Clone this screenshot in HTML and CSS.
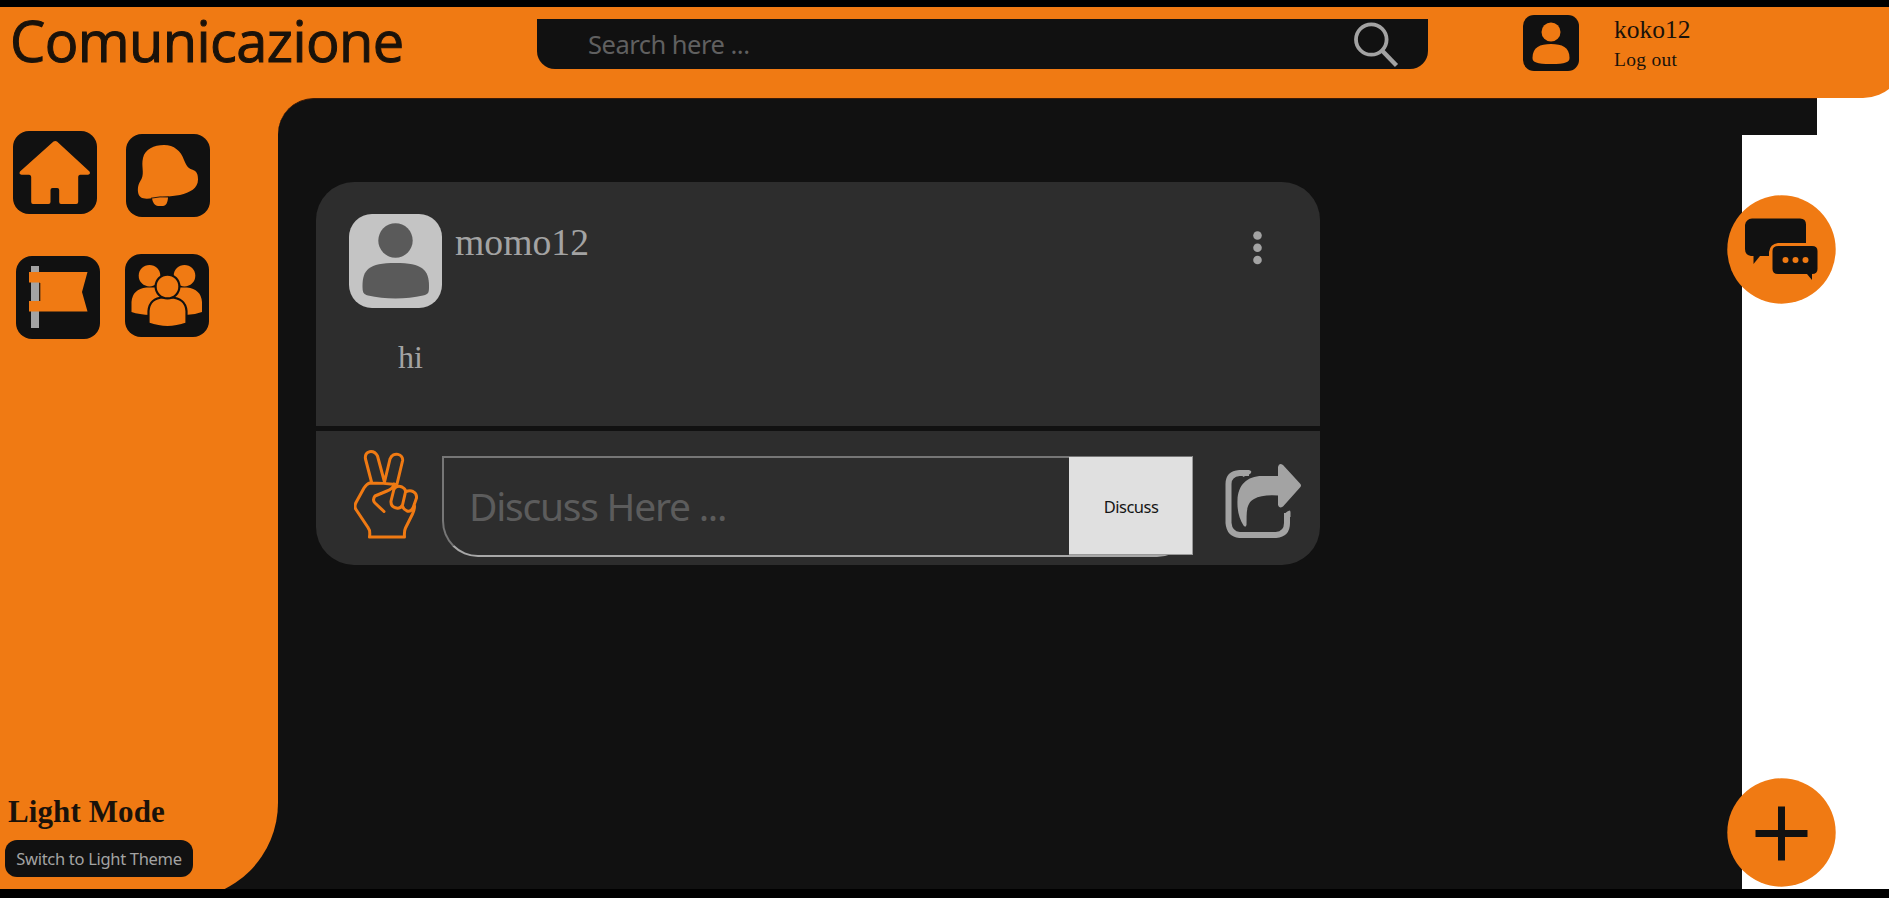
FILE: index.html
```html
<!DOCTYPE html>
<html lang="en">
<head>
<meta charset="utf-8">
<title>Comunicazione</title>
<link rel="stylesheet" href="styles.css">
</head>
<body>
<div class="screen">
  <header class="header">
    <h1 class="brand">Comunicazione</h1>
    <div class="search">
      <span class="search-hint">Search here ...</span>
      <svg class="search-icon" width="46" height="46" viewBox="0 0 46 46"><ellipse cx="18.300" cy="17.500" rx="15.300" ry="15.200" fill="none" stroke="#a3a3a3" stroke-width="3.800"/><path d="M29 28.500L43.500 43.500" stroke="#a3a3a3" stroke-width="4.400"/></svg>
    </div>
    <svg class="me" width="56" height="56" viewBox="0 0 56 56"><rect width="56" height="56" rx="11" fill="#111"/><circle cx="28" cy="17" r="9.500" fill="#f07a13"/><path d="M9.500 43C9.500 32 17 29 28 29s18.500 3 18.500 14c0 4-4 6-18.500 6s-18.500-2-18.500-6z" fill="#f07a13"/></svg>
    <div class="account"><span class="account-name">koko12</span><span class="logout">Log out</span></div>
  </header>

  <div class="body">
    <aside class="sidebar">
      <nav class="nav">
        <svg class="nav-home" width="84" height="83" viewBox="0 0 84 83"><rect width="84" height="83" rx="16" fill="#111"/><path d="M44 10.500L76.500 40.500q1.500 2.500-1.500 3.200H67q-1.800.3-1.800 2V71q0 2-2 2H48q-1.800 0-1.800-2V59q0-2-2-2H39.500q-2 0-2 2v12q0 2-2 2H20q-1.800 0-1.800-2V46q0-2-2-2.300H8.500q-3-.5-1.500-3.200L40.500 10.500q1.800-1.200 3.500 0z" fill="#f07a13"/></svg>
        <svg class="nav-bell" width="84" height="83" viewBox="0 0 84 83"><rect width="84" height="83" rx="16" fill="#111"/><path d="M26 63h16c0 5-2 9-5 9h-5c-3 0-6-4-6-9z" fill="#f07a13"/><path d="M17 24C19 15 28 11 38 11c10 0 17 6 20 15 2.500 6 4 8 8 9.500 5 1.500 6 5 6 10 0 9-8 13-18 15.500-10 2-19 1.500-27 3-8 1.500-14 1-15-6-.5-6 1-9 3.500-13 3-7-.5-13 1.500-21z" fill="#f07a13"/><path d="M25 64.200Q34 62.200 43 63" fill="none" stroke="#111" stroke-width=".9"/></svg>
        <svg class="nav-flag" width="84" height="83" viewBox="0 0 84 83"><rect width="84" height="83" rx="16" fill="#111"/><path d="M15 10h8v62h-8z" fill="#a3a3a3"/><path d="M13 16h58.500L66 36l5.500 19.500H13V45h10.500V26.500H13z" fill="#f07a13"/><path d="M23.800 27v18" stroke="#111" stroke-width="1"/></svg>
        <svg class="nav-group" width="84" height="83" viewBox="0 0 84 83"><rect width="84" height="83" rx="16" fill="#111"/><g fill="#f07a13"><circle cx="24.500" cy="21.700" r="10.800"/><circle cx="59.500" cy="21.700" r="10.800"/><path d="M6.500 58V48q1-13 15-14.500h40.500Q76 35 77 48v10q-9 3.500-19 3H26q-12-.5-19.500-3z"/></g><g fill="#f07a13" stroke="#111" stroke-width="2.200"><path d="M23.500 69.500V57q1-13 15-13.500h7q15 .5 16 13.500v12.500q-10 3.500-19 3.500t-19-3.500z"/><circle cx="42.500" cy="32.500" r="11.900"/></g></svg>
      </nav>
      <div class="theme"><strong class="theme-title">Light Mode</strong><button class="theme-button">Switch to Light Theme</button></div>
    </aside>

    <main class="feed">
      <article class="post">
        <div class="post-head">
          <svg class="avatar" width="93" height="94" viewBox="0 0 93 94"><rect width="93" height="94" rx="23" fill="#c4c4c4"/><circle cx="46.500" cy="26.500" r="17.200" fill="#5a5a5a"/><path d="M13.500 72c0-16 6-23 33-23s33.500 7 33.500 23c0 6 0 8-6 9.500-17 4-38 4-55 0-5-1.500-5.500-3.500-5.500-9.500z" fill="#5a5a5a"/></svg>
          <span class="author">momo12</span>
          <svg class="more" width="10" height="36" viewBox="0 0 10 36" fill="#a3a3a3"><circle cx="4.500" cy="5.500" r="4.300"/><circle cx="4.500" cy="17.800" r="4.300"/><circle cx="4.500" cy="30" r="4.300"/></svg>
        </div>
        <p class="post-text">hi</p>
        <div class="post-foot">
          <svg class="peace" width="66" height="90" viewBox="0 0 66 90" fill="none" stroke="#f07a13" stroke-width="3" stroke-linejoin="round" stroke-linecap="round"><path d="M17.500 32L11.500 9C10 0 20 -.5 23.500 6l7 26L36 9c3-8 14-5 12.500 2L43 34M42 34.500q-12-1.500-26-1.500-3 .5-6 5L2 52.500q-2 4 0 7l12 18q2.500 3 1.500 9.500h35q-.5-6 1-9l7-14q2-4 2-8"/><path d="M40 34q-1 5-7 7l-12 5q-3 4 0 7L30 61.500M37 51l3-12q3-4 8-2 4 2 3.500 5l-3 13q-2 4-6 3-6-1-5.500-7zM51.500 42q4-2 7.500-.5 4 2 3.500 6.500l-3.500 10q-2 4-6 3-4-2-4.500-5"/></svg>
          <div class="discuss">
            <span class="discuss-hint">Discuss Here ...</span>
            <button class="discuss-button">Discuss</button>
          </div>
          <svg class="share" width="76" height="76" viewBox="0 0 76 76"><path d="M24 10H14.500Q3.500 11 3.500 21V60q1 11 11 12H51q11-1 11-12V50" fill="none" stroke="#a3a3a3" stroke-width="6"/><path d="M16 7h8q4 1 1 4l-7 3z" fill="#a3a3a3"/><path d="M59.500 53q0-4 5-5.500 1 0 1 2V54h-6z" fill="#a3a3a3"/><path d="M53 13V4q1-5 5-2L75 20.500q2 2 0 4L58 43.500Q54 46 53 42V32.500Q37 31.500 29 36c-9 5-7 16-7.500 26q-1 3-3 .5C14 55 12 47 12.500 37 13 22 22 13 37 13z" fill="#a3a3a3"/></svg>
        </div>
      </article>
    </main>
    <div class="step"></div>
  </div>

  <svg class="fab fab-chat" width="109" height="109" viewBox="0 0 109 109"><circle cx="54.500" cy="54.500" r="54.200" fill="#f07a13"/><path d="M25 23.500h48q6 0 6 6V48H51q-8 1-9 9v4H33l-6.500 8V61H24q-6-1-6-7V30q1-6 7-6.500z" fill="#111"/><path d="M51.500 51H85q5.500 0 5.500 5v18q0 5-5.500 5v6l-5-6H51q-5.500 0-5.500-5V56q0-5 6-5z" fill="#111"/><g fill="#f07a13"><circle cx="58.500" cy="65" r="3"/><circle cx="68.500" cy="65" r="3"/><circle cx="78.500" cy="65" r="3"/></g></svg>
  <svg class="fab fab-add" width="109" height="109" viewBox="0 0 109 109"><circle cx="54.500" cy="54.500" r="54.200" fill="#f07a13"/><path d="M28.500 52h52v7h-52zM51 28.500h7v54h-7z" fill="#111"/></svg>
</div>
</body>
</html>
```

FILE: styles.css
```css
* { box-sizing: border-box; }
body { margin: 0; padding: 7px 0 9px; height: 898px; background: #000; overflow: hidden; font-family: "Liberation Serif", serif; }
button { border: 0; margin: 0; padding: 0; }
svg { display: block; flex: none; }
.screen { position: relative; height: 882px; background: #fff; }

.header { display: flex; align-items: flex-start; height: 91px; margin-right: -16px; background: #f07a13; border-bottom-right-radius: 42px; color: #1a120a; }
.brand { width: 537px; margin: 0; padding-left: 10px; font: 400 56px/66px "Open Sans", sans-serif; letter-spacing: -.6px; -webkit-text-stroke: 1px #1a120a; white-space: nowrap; flex: none; }
.search { display: flex; justify-content: space-between; width: 891px; height: 50px; margin-top: 12px; padding: 0 29px 0 51px; background: #111; border-radius: 0 0 18px 18px; flex: none; }
.search-hint { font: 25.500px/51px "Noto Sans", sans-serif; letter-spacing: -.5px; color: #606060; }
.search-icon { margin-top: 3px; }
.me { margin: 8px 35px 0 95px; }
.account { display: flex; flex-direction: column; padding-top: 8px; }
.account-name { font-size: 25.500px; line-height: 30px; }
.logout { font-size: 19.500px; line-height: 29px; letter-spacing: .3px; }

.body { display: flex; align-items: flex-start; height: 791px; overflow: hidden; background: linear-gradient(#f07a13, #f07a13) 0 0 / 320px 60px no-repeat, linear-gradient(#111, #111) 0 0 / 320px 100% no-repeat; }
.sidebar { display: flex; flex-direction: column; justify-content: space-between; width: 278px; height: 801px; padding: 33px 5px 22px; background: #f07a13; border-bottom-right-radius: 96px; flex: none; }
.nav { display: grid; grid-template-columns: 113px 84px; grid-template-rows: 121px 83px; padding-left: 8px; }
.nav-bell { margin-top: 3px; }
.nav-flag { margin: 4px 0 0 3px; }
.nav-group { margin: 2px 0 0 -1px; }
.theme { display: flex; flex-direction: column; align-items: flex-start; gap: 10px; color: #1a120a; }
.theme-title { padding-left: 3px; font-size: 31px; line-height: 36px; letter-spacing: .1px; }
.theme-button { width: 188px; height: 37px; border-radius: 12px; background: #111; color: #a3a3a3; font: 16.500px/37px "Noto Sans", sans-serif; letter-spacing: -.3px; white-space: nowrap; }

.feed { width: 1464px; height: 791px; padding: 83px 0 0 38px; background: #111; border-top-left-radius: 36px; flex: none; }
.feed, .step { border-top: 1px solid #3a1a08; }
.step { width: 75px; height: 37px; background: #111; flex: none; }

.post { display: flex; flex-direction: column; width: 1004px; height: 383px; border-radius: 38px; background: #2d2d2d; color: #a3a3a3; overflow: hidden; }
.post-head { display: flex; align-items: flex-start; height: 126px; padding: 32px 57px 0 33px; }
.author { flex: 1; padding: 7px 0 0 13px; font-size: 37.700px; line-height: 42px; }
.more { margin-top: 16px; }
.post-text { height: 118px; margin: 0; padding: 31px 0 0 82px; font-size: 32px; line-height: 36px; }
.post-foot { display: flex; align-items: flex-start; flex: 1; border-top: 5px solid #111; padding-left: 38px; }
.peace { margin-top: 19px; }
.discuss { display: flex; justify-content: space-between; width: 751px; height: 101px; margin: 25px 32px 0 22px; border: 2px solid; border-color: #767676 #a0a0a0 #a8a8a8 #767676; border-radius: 0 0 36px 36px; flex: none; }
.discuss-hint { padding-left: 25px; font: 39px/96px "Noto Sans", sans-serif; letter-spacing: -1.250px; color: #5c5c5c; }
.discuss-button { width: 124px; height: 98px; margin: -1px -2px 0 0; padding: 2px 0 0 1px; border: 1px solid #999; border-width: 0 1px 1px 0; background: #e0e0e0; color: #151515; font: 16.500px "Noto Sans", sans-serif; letter-spacing: -.5px; flex: none; }
.share { margin-top: 32px; }

.fab { position: absolute; left: 1727px; }
.fab-chat { top: 188px; }
.fab-add { top: 771px; }
```
